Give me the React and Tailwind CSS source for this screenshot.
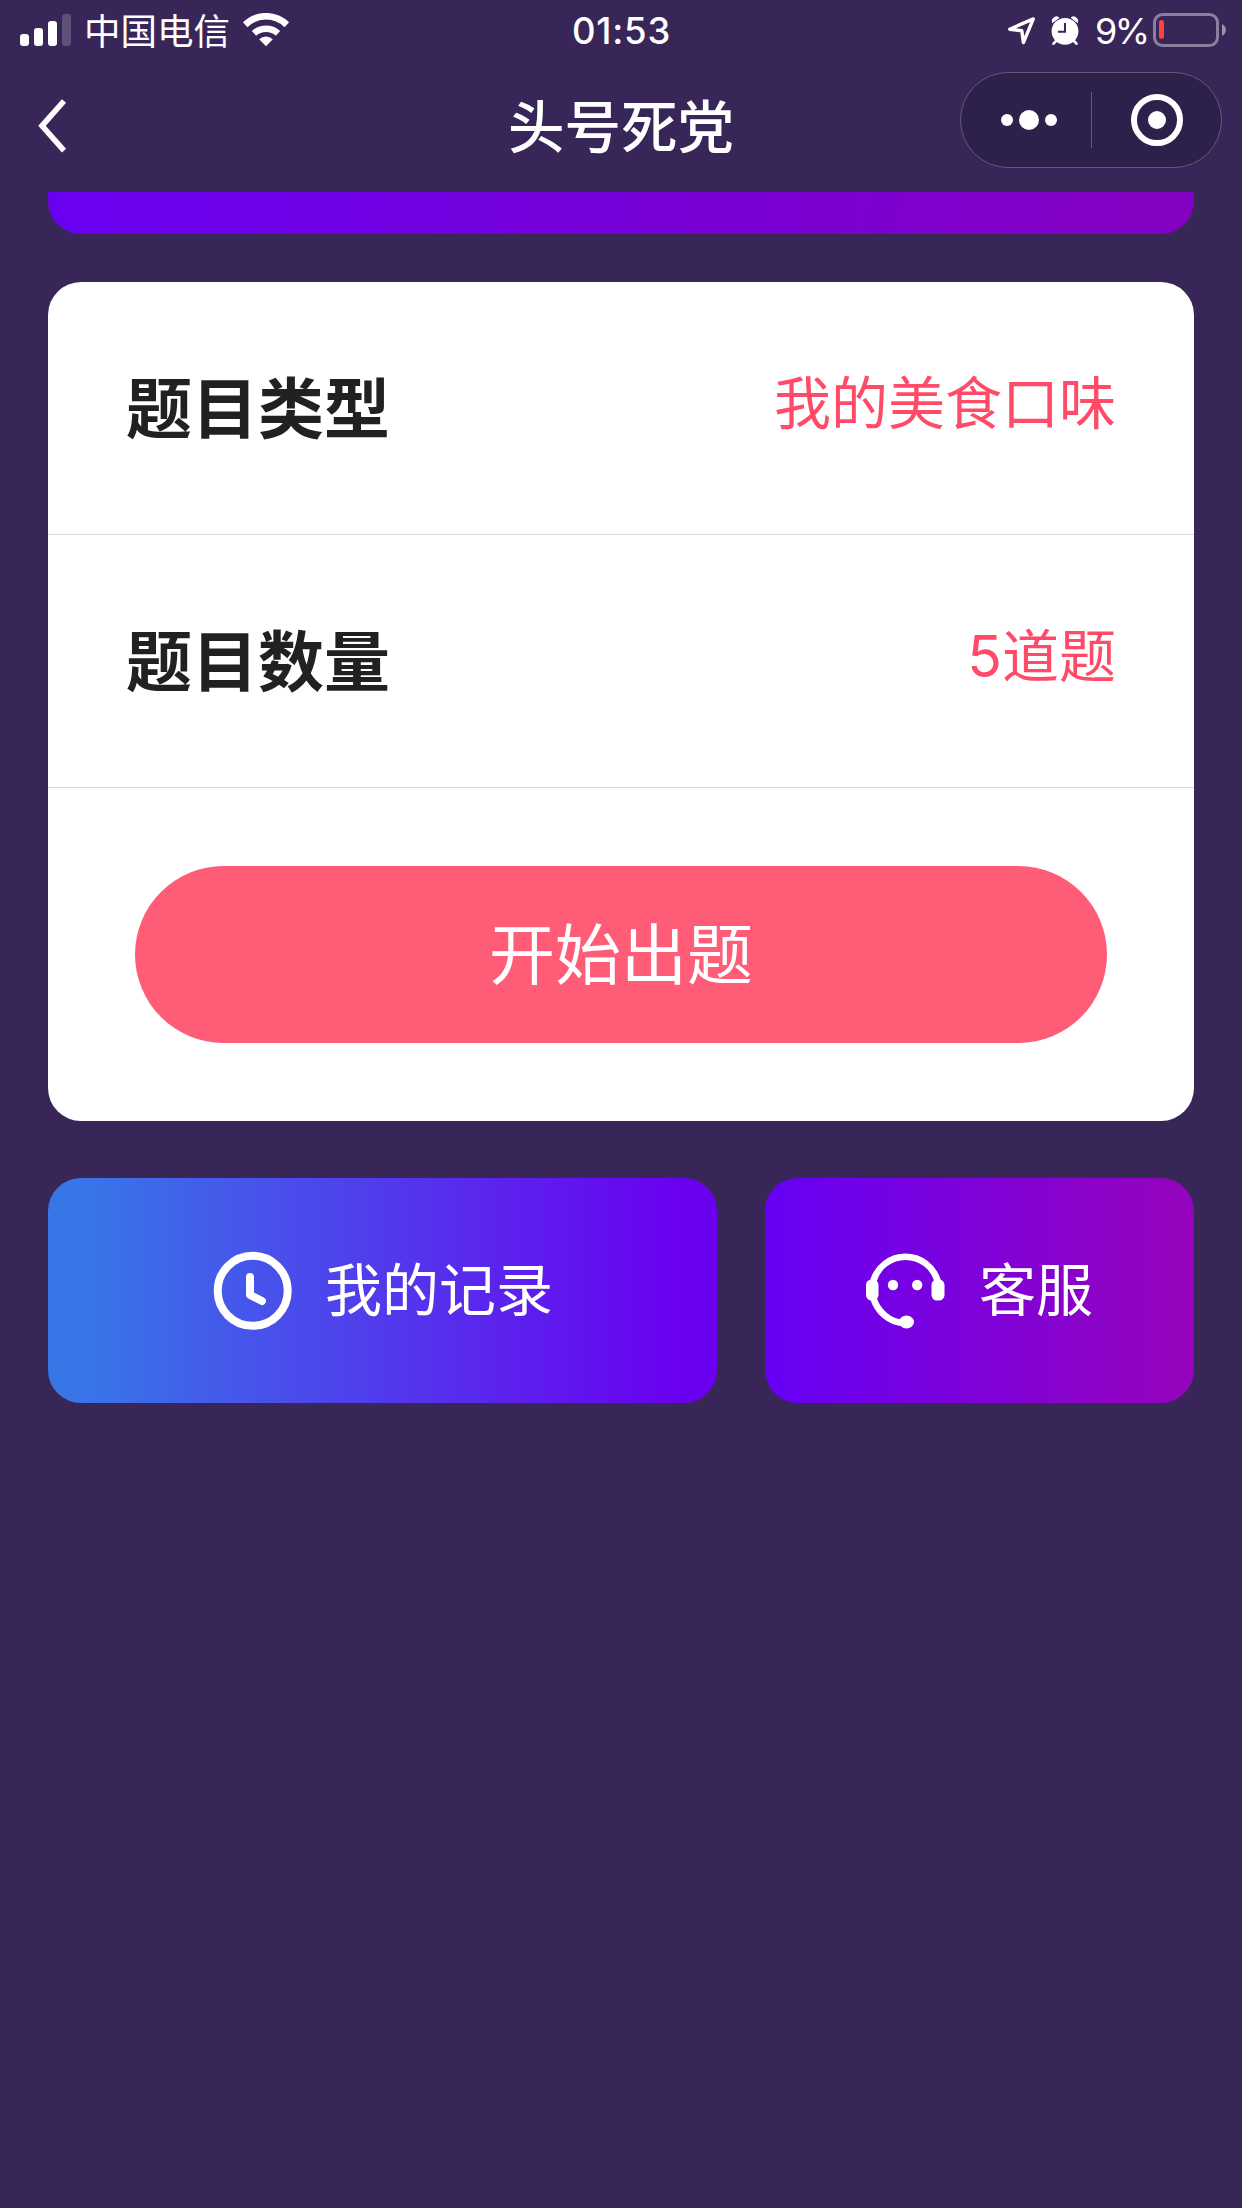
function StatusBar() {
  return (
    <div className="flex h-[60px] items-start justify-between text-white">
      <div className="flex flex-1 items-start pl-5">
        <div className="mt-[14px] flex h-8 items-end gap-[5px]">
          <i className="h-3 w-[9px] rounded-[3px] bg-white" />
          <i className="h-[18px] w-[9px] rounded-[3px] bg-white" />
          <i className="h-[25px] w-[9px] rounded-[3px] bg-white" />
          <i className="h-8 w-[9px] rounded-[3px] bg-white/20" />
        </div>
        <span className="mt-[8px] ml-[13px] text-[36.5px] leading-[48px] whitespace-nowrap">中国电信</span>
        <svg className="mt-[13px] ml-[13px]" width="46" height="34" viewBox="0 0 46 34" fill="none">
          <path d="M2.2 11.8A29.5 29.5 0 0 1 43.8 11.8" stroke="#fff" strokeWidth="6.6" />
          <path d="M11 20.3A18 18 0 0 1 35 20.3" stroke="#fff" strokeWidth="6.4" />
          <path d="M23 33.2L16.2 26.2A9.8 9.8 0 0 1 29.8 26.2Z" fill="#fff" />
        </svg>
      </div>
      <span className="mt-[7px] -ml-[3px] text-[36.5px] leading-[48px] font-medium tracking-[0.8px]">01:53</span>
      <div className="flex flex-1 items-start justify-end pr-4">
        <svg className="mt-[16px]" width="30" height="30" viewBox="0 0 30 30" fill="none" stroke="#fff" strokeWidth="3.4" strokeLinejoin="round">
          <path d="M2.7 13.2L26.3 2.9L16.4 26.6L14.8 14.7Z" />
        </svg>
        <svg className="mt-[16px] ml-[14px]" width="28" height="30" viewBox="0 0 28 30" fill="none">
          <path d="M1.5 6.6A4.3 4.3 0 0 1 8 1.6Z" fill="#fff" stroke="#fff" strokeLinejoin="round" />
          <path d="M26.5 6.6A4.3 4.3 0 0 0 20 1.6Z" fill="#fff" stroke="#fff" strokeLinejoin="round" />
          <path d="M5 25L2.5 27.7M23 25L25.5 27.7" stroke="#fff" strokeWidth="2.6" strokeLinecap="round" />
          <circle cx="14" cy="15.3" r="13.4" fill="#fff" />
          <path d="M14 7V15.8H7" stroke="#382659" strokeWidth="2" />
        </svg>
        <span className="mt-[7px] ml-[16px] w-[50px] text-[36px] leading-[48px] tracking-[-2.5px] whitespace-nowrap">9%</span>
        <svg className="mt-[13px] ml-[8px]" width="73" height="34" viewBox="0 0 73 34" fill="none">
          <rect x="1.5" y="1.5" width="63" height="31" rx="8" stroke="#8a7f9f" strokeWidth="3" />
          <rect x="6" y="7" width="5" height="19" rx="2.4" fill="#ff453a" />
          <path d="M69 11C74.2 14 74.2 20 69 23Z" fill="#9c93ac" />
        </svg>
      </div>
    </div>
  );
}

function NavBar() {
  return (
    <div className="grid h-[132px] grid-cols-3 items-start text-white">
      <svg className="mt-[38px] ml-[38px]" width="30" height="56" viewBox="0 0 30 56" fill="none" stroke="#fff" strokeWidth="5.6">
        <path d="M26 3L4 27.8L26 52.6" />
      </svg>
      <h1 className="mt-[26px] text-center text-[56.5px] leading-[84px] font-medium">头号死党</h1>
      <div className="mt-[12px] mr-5 flex h-24 w-[262px] items-center justify-self-end rounded-full border border-[#655979] bg-[#2d204b]">
        <div className="flex w-[130px] shrink-0 items-center justify-center gap-[6px] pl-[6px]">
          <i className="h-3 w-3 rounded-full bg-white" />
          <i className="h-5 w-5 rounded-full bg-white" />
          <i className="h-3 w-3 rounded-full bg-white" />
        </div>
        <i className="h-14 w-px shrink-0 bg-[#655979]" />
        <div className="flex flex-1 items-center justify-center">
          <div className="flex h-[52px] w-[52px] items-center justify-center rounded-full border-[6px] border-white">
            <i className="h-[18px] w-[18px] rounded-full bg-white" />
          </div>
        </div>
      </div>
    </div>
  );
}

function Row({ label, value }) {
  return (
    <div className="flex h-[253px] items-start justify-between border-b border-[#d9d9d9] pr-[78px] pl-[78px]">
      <span className="mt-[79px] text-[66px] leading-[96px] font-bold text-[#212121]">{label}</span>
      <span className="mt-[81px] text-[57px] leading-[82px] text-[#ff4b68]">{value}</span>
    </div>
  );
}

export default function App() {
  return (
    <div className={'h-[2208px] w-[1242px] overflow-hidden bg-[#382659] font-["Inter","Noto_Sans_CJK_SC",sans-serif]'}>
      <StatusBar />
      <NavBar />
      <main className="px-12">
        <div className="h-[42px] rounded-b-[33px] bg-[linear-gradient(100deg,#6900f1,#8401c0)]" />
        <section className="mt-12 h-[839px] rounded-[33px] bg-white">
          <Row label="题目类型" value="我的美食口味" />
          <Row label="题目数量" value="5道题" />
          <button className="mx-auto mt-[78px] flex h-[177px] w-[972px] items-center justify-center rounded-full bg-[#ff5c78] text-[66px] leading-[96px] text-white">
            开始出题
          </button>
        </section>
        <div className="mt-[57px] flex gap-12 text-[57px] leading-[84px] text-white">
          <button className="flex h-[225px] w-[669px] items-center rounded-[33px] bg-[linear-gradient(90deg,#3876e8_5%,#6a00f0_94%)] pl-[165px]">
            <svg width="80" height="80" viewBox="0 0 80 80" fill="none" stroke="#fff" strokeWidth="8">
              <circle cx="39.7" cy="39.8" r="35" />
              <path d="M37 26V44L49 50" strokeLinecap="round" strokeLinejoin="round" />
            </svg>
            <span className="mt-px ml-[32px]">我的记录</span>
          </button>
          <button className="flex h-[225px] w-[429px] items-center rounded-[33px] bg-[linear-gradient(90deg,#6800f3_4%,#9403be_95%)] pl-[101px]">
            <svg width="80" height="80" viewBox="0 0 80 80" fill="none">
              <path d="M71.7 30A33.5 33.5 0 0 0 7.3 30M7 46C11 60 23 72 39 72" stroke="#fff" strokeWidth="6.5" />
              <rect x="0" y="28.5" width="12.5" height="21" rx="5.5" fill="#fff" />
              <rect x="65.5" y="28.5" width="13" height="21" rx="5.5" fill="#fff" />
              <circle cx="27" cy="34" r="5.2" fill="#fff" />
              <circle cx="51.2" cy="34" r="5.2" fill="#fff" />
              <ellipse cx="40.5" cy="71" rx="7.5" ry="6.5" fill="#fff" />
            </svg>
            <span className="mt-px ml-[33px]">客服</span>
          </button>
        </div>
      </main>
    </div>
  );
}
